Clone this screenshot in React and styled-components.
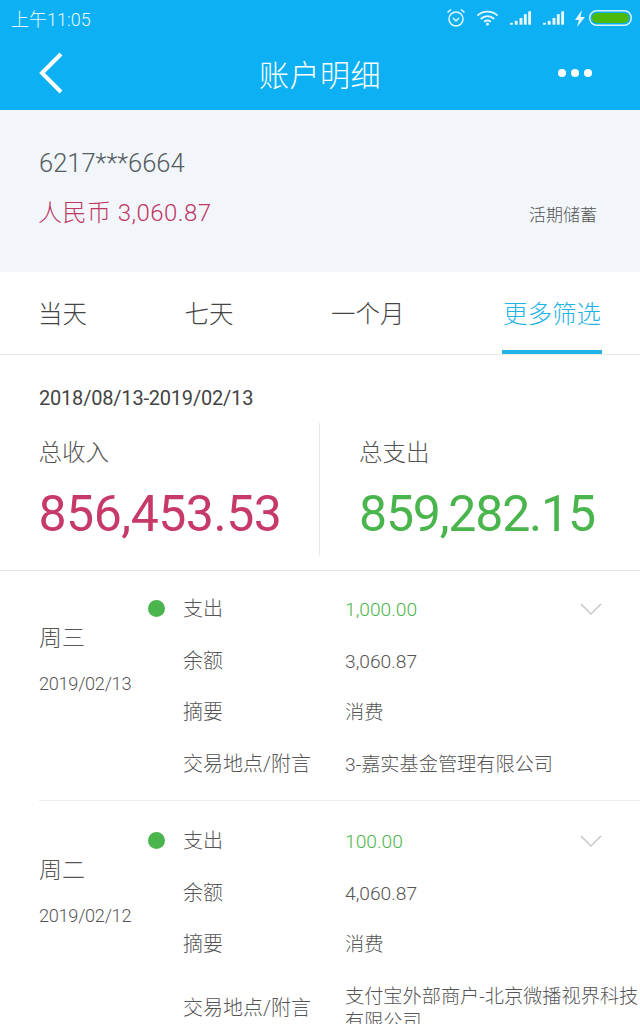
import styled, { createGlobalStyle } from "styled-components";

const GlobalStyle = createGlobalStyle`
  html, body {
    margin: 0;
    padding: 0;
    background: #fff;
  }
  body {
    font-family: "Roboto", "Noto Sans CJK SC", sans-serif;
    font-weight: 300;
    color: #555;
  }
`;

const Page = styled.div`
  width: 640px;
  height: 1024px;
  overflow: hidden;
  background: #fff;
`;

const Header = styled.header`
  height: 110px;
  background: #0db0f2;
  color: #fff;
`;

const StatusBar = styled.div`
  height: 36px;
  padding: 0 8px 0 11px;
  display: flex;
  align-items: center;
  justify-content: space-between;
  font-size: 18px;
  color: #e6f7fe;
`;

const StatusIcons = styled.div`
  display: flex;
  align-items: center;
  gap: 10px;
`;

const NavBar = styled.div`
  height: 74px;
  padding: 0 48px 0 38px;
  display: flex;
  align-items: center;
  justify-content: space-between;
`;

const NavTitle = styled.div`
  margin-left: 18px;
  font-size: 30px;
  letter-spacing: 0.5px;
`;

const Dots = styled.div`
  display: flex;
  gap: 5px;
`;

const Dot = styled.span`
  width: 8px;
  height: 8px;
  border-radius: 50%;
  background: #fff;
`;

const Account = styled.section`
  height: 162px;
  box-sizing: border-box;
  padding: 36px 43px 0 39px;
  background: #f2f6fa;
`;

const CardNumber = styled.div`
  font-size: 25.5px;
  line-height: 34px;
  color: #555c60;
`;

const BalanceRow = styled.div`
  margin-top: 16px;
  display: flex;
  align-items: center;
  justify-content: space-between;
`;

const Balance = styled.div`
  font-size: 24px;
  line-height: 34px;
  letter-spacing: 0.45px;
  margin-left: -1px;
  color: #bf3765;
`;

const AccountType = styled.div`
  font-size: 17px;
  color: #555;
`;

const Tabs = styled.nav`
  height: 83px;
  box-sizing: border-box;
  padding: 0 38px;
  display: flex;
  justify-content: space-between;
  border-bottom: 1px solid #e8e8e8;
`;

const Tab = styled.div`
  height: 82px;
  box-sizing: border-box;
  padding: ${(props) => (props.$active ? "2px 1px 0" : "2px 0 0")};
  display: flex;
  align-items: center;
  font-size: 24.5px;
  color: ${(props) => (props.$active ? "#1fb3e8" : "#444")};
  border-bottom: 4px solid ${(props) => (props.$active ? "#1fb3e8" : "transparent")};
`;

const Summary = styled.section`
  height: 216px;
  box-sizing: border-box;
  border-bottom: 1px solid #e4e4e4;
`;

const DateRange = styled.div`
  height: 68px;
  padding: 27px 0 0 39px;
  box-sizing: border-box;
  font-size: 20px;
  font-weight: 400;
  line-height: 32px;
  letter-spacing: -0.2px;
  color: #444;
`;

const Totals = styled.div`
  display: grid;
  grid-template-columns: 319px 321px;
  height: 133px;
`;

const Total = styled.div`
  padding-left: ${(props) => (props.$right ? "39px" : "38.5px")};
  border-left: ${(props) => (props.$right ? "1px solid #e8e8e8" : "none")};
`;

const TotalLabel = styled.div`
  font-size: 23.5px;
  line-height: 32px;
  padding-top: 14px;
  color: #555;
`;

const TotalValue = styled.div`
  font-size: 50px;
  line-height: 60px;
  margin-top: 15px;
  font-weight: 400;
  letter-spacing: ${(props) => props.$spacing};
  color: ${(props) => props.$color};
`;

const Record = styled.article`
  margin-left: 39px;
  height: ${(props) => (props.$tall ? "auto" : "230px")};
  box-sizing: border-box;
  padding-top: ${(props) => (props.$tall ? "2px" : "0")};
  display: flex;
  border-bottom: ${(props) => (props.$tall ? "none" : "1px solid #ececec")};
`;

const DayColumn = styled.div`
  width: 109px;
  padding-top: 51px;
  position: relative;
`;

const Weekday = styled.div`
  font-size: 23px;
  line-height: 34px;
`;

const DayDate = styled.div`
  font-size: 18.2px;
  line-height: 26px;
  margin-top: 15px;
  letter-spacing: -0.3px;
`;

const StatusDot = styled.span`
  position: absolute;
  left: 109px;
  top: 29px;
  width: 17px;
  height: 17px;
  border-radius: 50%;
  background: #4ab54c;
`;

const Details = styled.div`
  flex: 1;
  padding: 13px 0 0 35px;
  position: relative;
`;

const DetailRow = styled.div`
  display: flex;
  min-height: 51.5px;
  align-items: center;
`;

const DetailLabel = styled.div`
  width: 162px;
  flex-shrink: 0;
  font-size: 20px;
  line-height: 51px;
  white-space: nowrap;
`;

const DetailValue = styled.div`
  font-size: 19.2px;
  line-height: ${(props) => (props.$wrap ? "25px" : "51px")};
  padding: ${(props) => (props.$wrap ? "13px 0 12px" : "0")};
  color: ${(props) => (props.$green ? "#4ab54c" : "#555")};
`;

const Chevron = styled.svg`
  position: absolute;
  right: 37px;
  top: 31px;
`;

const Battery = styled.svg`
  margin-left: -6px;
`;

const AlarmIcon = () => (
  <svg width="20" height="20" viewBox="0 0 20 20" fill="none" stroke="#e6f7fe" strokeWidth="1.5">
    <circle cx="10" cy="11" r="7" />
    <path d="M7 10l3 3 3-3" />
    <path d="M1.5 4.5L5 1.5M18.5 4.5L15 1.5" />
  </svg>
);

const WifiIcon = () => (
  <svg width="23" height="18" viewBox="0 0 24 18" fill="none" stroke="#e6f7fe" strokeWidth="2">
    <path d="M1.5 6.5C7 1 17 1 22.5 6.5" />
    <path d="M5 10C9 6 15 6 19 10" />
    <path d="M8.5 13C10.5 11.5 13.5 11.5 15.5 13" />
    <circle cx="12" cy="15.5" r="1.5" fill="#e6f7fe" stroke="none" />
  </svg>
);

const SignalIcon = () => (
  <svg width="23" height="16" viewBox="0 0 24 16" fill="#e6f7fe">
    <rect x="1" y="13" width="3" height="2" />
    <rect x="6" y="11" width="3" height="4" />
    <rect x="11" y="8" width="3" height="7" />
    <rect x="15.5" y="4" width="3" height="11" />
    <rect x="20" y="1" width="3" height="14" />
  </svg>
);

const BoltIcon = () => (
  <svg width="10" height="17" viewBox="0 0 10 17" fill="#e6f7fe">
    <path d="M7 0L0 10h4l-2 7 8-10H5.5z" />
  </svg>
);

const BatteryIcon = () => (
  <Battery width="43" height="16" viewBox="0 0 43 16">
    <rect x="0.75" y="0.75" width="41.5" height="14.5" rx="7" fill="none" stroke="#d8f3fd" strokeWidth="1.5" />
    <rect x="3" y="3" width="37" height="10" rx="5" fill="#4cba0c" />
  </Battery>
);

const records = [
  {
    weekday: "周三",
    date: "2019/02/13",
    amount: "1,000.00",
    balance: "3,060.87",
    memo: "消费",
    place: "3-嘉实基金管理有限公司",
  },
  {
    weekday: "周二",
    date: "2019/02/12",
    amount: "100.00",
    balance: "4,060.87",
    memo: "消费",
    place: "支付宝外部商户-北京微播视界科技有限公司",
    tall: true,
  },
];

const tabs = ["当天", "七天", "一个月", "更多筛选"];

export default function App() {
  return (
    <Page>
      <GlobalStyle />
      <Header>
        <StatusBar>
          <span>上午11:05</span>
          <StatusIcons>
            <AlarmIcon />
            <WifiIcon />
            <SignalIcon />
            <SignalIcon />
            <BoltIcon />
            <BatteryIcon />
          </StatusIcons>
        </StatusBar>
        <NavBar>
          <svg width="26" height="44" viewBox="0 0 26 44" fill="none" stroke="#fff" strokeWidth="4">
            <path d="M23 3L4 22l19 19" />
          </svg>
          <NavTitle>账户明细</NavTitle>
          <Dots>
            <Dot />
            <Dot />
            <Dot />
          </Dots>
        </NavBar>
      </Header>

      <Account>
        <CardNumber>6217***6664</CardNumber>
        <BalanceRow>
          <Balance>人民币 3,060.87</Balance>
          <AccountType>活期储蓄</AccountType>
        </BalanceRow>
      </Account>

      <Tabs>
        {tabs.map((tab, i) => (
          <Tab key={tab} $active={i === 3}>
            {tab}
          </Tab>
        ))}
      </Tabs>

      <Summary>
        <DateRange>2018/08/13-2019/02/13</DateRange>
        <Totals>
          <Total>
            <TotalLabel>总收入</TotalLabel>
            <TotalValue $color="#c73a68" $spacing="-0.5px">856,453.53</TotalValue>
          </Total>
          <Total $right>
            <TotalLabel>总支出</TotalLabel>
            <TotalValue $color="#4ab54c" $spacing="-1.2px">859,282.15</TotalValue>
          </Total>
        </Totals>
      </Summary>

      {records.map((r) => (
        <Record key={r.date} $tall={r.tall}>
          <DayColumn>
            <Weekday>{r.weekday}</Weekday>
            <DayDate>{r.date}</DayDate>
            <StatusDot />
          </DayColumn>
          <Details>
            <DetailRow>
              <DetailLabel>支出</DetailLabel>
              <DetailValue $green>{r.amount}</DetailValue>
            </DetailRow>
            <DetailRow>
              <DetailLabel>余额</DetailLabel>
              <DetailValue>{r.balance}</DetailValue>
            </DetailRow>
            <DetailRow>
              <DetailLabel>摘要</DetailLabel>
              <DetailValue>{r.memo}</DetailValue>
            </DetailRow>
            <DetailRow>
              <DetailLabel>交易地点/附言</DetailLabel>
              <DetailValue $wrap={r.tall}>{r.place}</DetailValue>
            </DetailRow>
            <Chevron width="24" height="14" viewBox="0 0 24 14" fill="none" stroke="#c8c8c8" strokeWidth="1.5">
              <path d="M2 2l10 10L22 2" />
            </Chevron>
          </Details>
        </Record>
      ))}
    </Page>
  );
}
